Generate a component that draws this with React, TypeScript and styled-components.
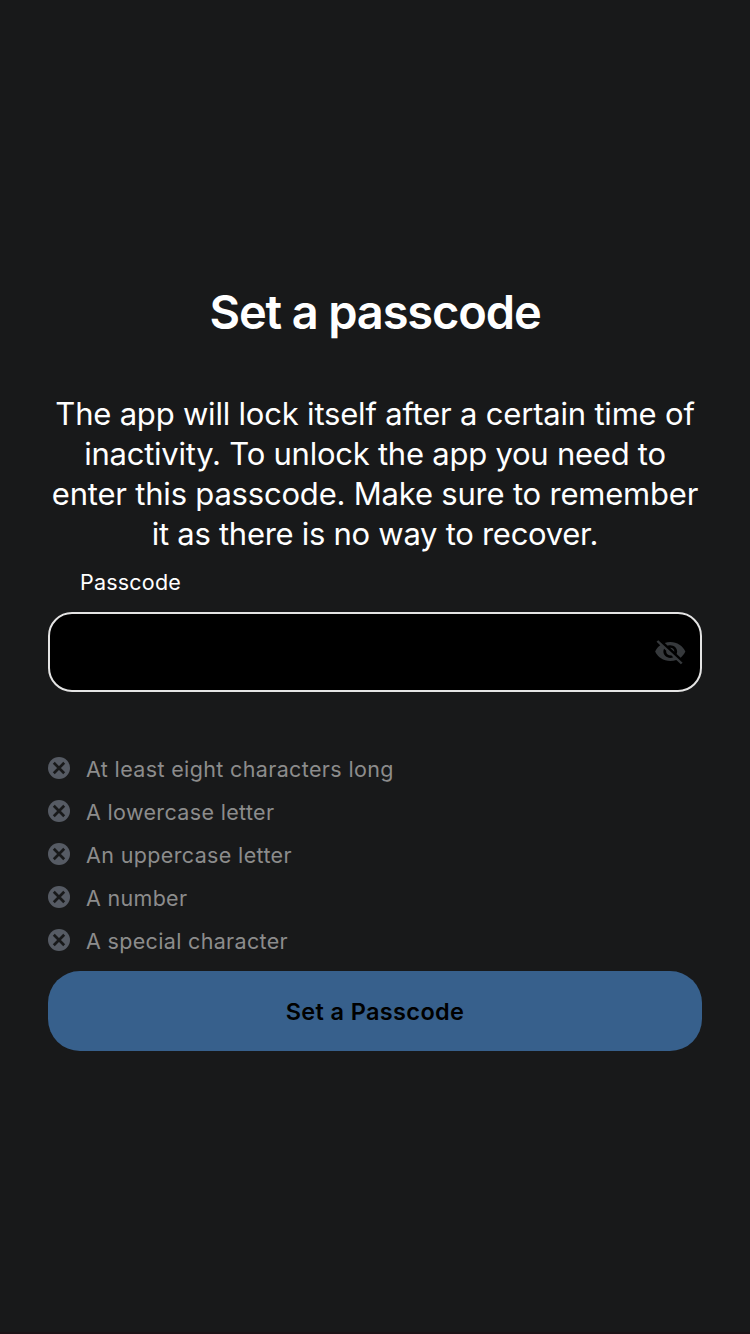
import React from "react";
import styled, { createGlobalStyle } from "styled-components";
import { IoMdEyeOff } from "react-icons/io";

const GlobalStyle = createGlobalStyle`
  * { box-sizing: border-box; }
  html, body { margin: 0; background: #18191a; }
`;

const Screen = styled.main`
  display: flex;
  flex-direction: column;
  width: 750px;
  height: 1334px;
  padding: 282px 48px 0;
  overflow: hidden;
  background: #18191a;
  border-bottom: 2px solid #1b1216;
  color: #fff;
  font-family: Inter, "Liberation Sans", sans-serif;
`;

const Title = styled.h1`
  margin: 0 0 52px;
  font-size: 47px;
  line-height: 60px;
  font-weight: 600;
  letter-spacing: -1.15px;
  text-align: center;
`;

const Description = styled.p`
  margin: 0 0 13px;
  font-size: 31px;
  line-height: 40px;
  text-align: center;
`;

const Line = styled.span<{ $spacing: number }>`
  display: block;
  white-space: nowrap;
  letter-spacing: ${(p) => p.$spacing}px;
`;

const Label = styled.label`
  margin: 0 0 15px 32px;
  font-size: 21.5px;
  line-height: 30px;
  letter-spacing: 0.2px;
`;

const Field = styled.div`
  display: flex;
  align-items: center;
  justify-content: flex-end;
  height: 80px;
  padding-right: 12.75px;
  border: 2px solid #e4e4e4;
  border-radius: 24px;
  background: #000;
  color: #36393c;
  svg { transform: scaleY(0.93); }
`;

const Rules = styled.ul`
  display: flex;
  flex-direction: column;
  margin: 55px 0 9px;
  padding: 0;
  list-style: none;
`;

const Rule = styled.li<{ $spacing: number }>`
  display: flex;
  align-items: center;
  gap: 16px;
  height: 43px;
  color: #8c8c8c;
  font-size: 21.5px;
  letter-spacing: ${(p) => p.$spacing}px;
  svg { margin-top: -2px; }
`;

const SubmitButton = styled.button`
  height: 80px;
  padding: 2px 0 0;
  border: 0;
  border-radius: 32px;
  background: #37608c;
  color: #000;
  font: 600 23.5px/78px Inter, "Liberation Sans", sans-serif;
  letter-spacing: 0.36px;
`;

const CrossBadge = () => (
  <svg width="22" height="22" viewBox="0 0 22 22">
    <circle cx="11" cy="11" r="11" fill="#565b64" />
    <path d="M5.8 5.8l10.4 10.4M16.2 5.8l-10.4 10.4" stroke="#18191a" strokeWidth="2.7" />
  </svg>
);

const lines = [
  { text: "The app will lock itself after a certain time of", spacing: -0.2 },
  { text: "inactivity. To unlock the app you need to", spacing: -0.24 },
  { text: "enter this passcode. Make sure to remember", spacing: -0.2 },
  { text: "it as there is no way to recover.", spacing: -0.28 },
];

const rules = [
  { text: "At least eight characters long", spacing: 0.36 },
  { text: "A lowercase letter", spacing: 0.34 },
  { text: "An uppercase letter", spacing: 0.36 },
  { text: "A number", spacing: 0.3 },
  { text: "A special character", spacing: 0.33 },
];

export default function App() {
  return (
    <>
      <GlobalStyle />
      <Screen>
        <Title>Set a passcode</Title>
        <Description>
          {lines.map((l) => (
            <Line key={l.text} $spacing={l.spacing}>{l.text}</Line>
          ))}
        </Description>
        <Label>Passcode</Label>
        <Field>
          <IoMdEyeOff size={34.5} />
        </Field>
        <Rules>
          {rules.map((r) => (
            <Rule key={r.text} $spacing={r.spacing}>
              <CrossBadge />
              {r.text}
            </Rule>
          ))}
        </Rules>
        <SubmitButton>Set a Passcode</SubmitButton>
      </Screen>
    </>
  );
}
